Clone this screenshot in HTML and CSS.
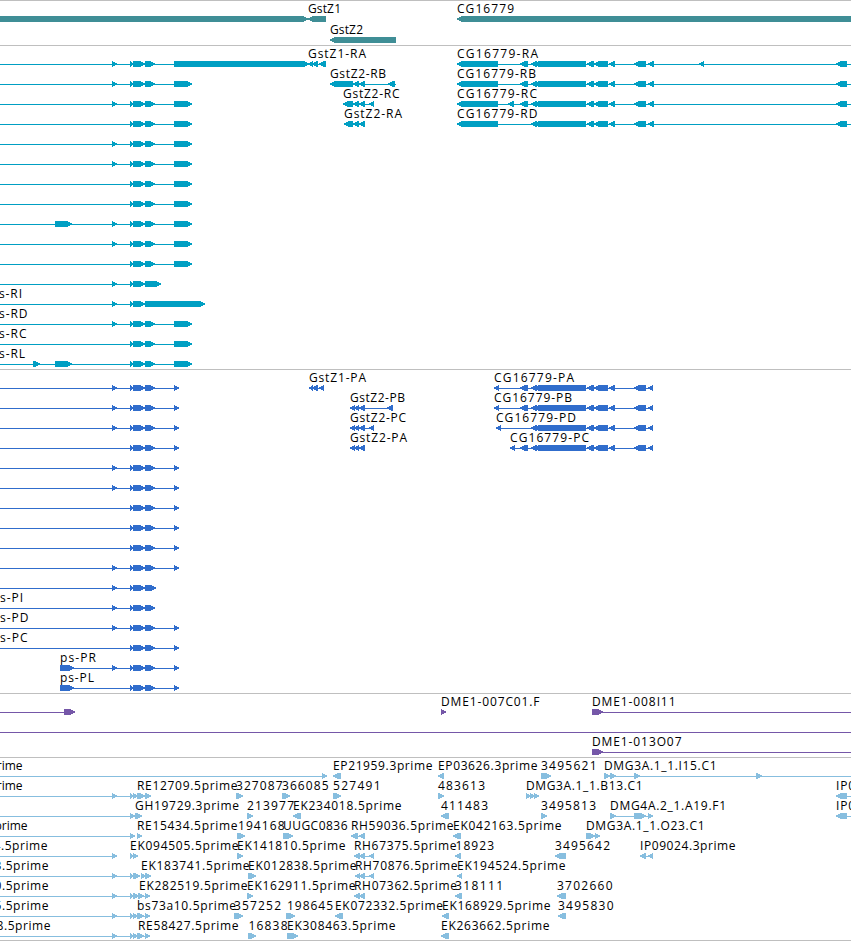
FILE: index.html
```html
<!DOCTYPE html>
<html lang="en">
<head>
<meta charset="utf-8">
<title>Genome tracks</title>
<link rel="stylesheet" href="styles.css">
</head>
<body>
<main class="browser" id="browser"></main>
<script src="tracks.js"></script>
</body>
</html>
```
FILE: styles.css
```css
body {
  margin: 0;
  background: #fff;
  overflow: hidden;
}

.browser {
  display: flex;
  flex-direction: column;
  width: 851px;
  border-bottom: 1px solid #bfbfbf;
}

.track {
  display: flex;
  flex-direction: column;
  border-top: 1px solid #bfbfbf;
  padding: 2px 0 1px;
}

.row {
  display: block;
  width: 851px;
  height: 20px;
  overflow: visible;
}

.genes { color: #3f8e96; padding-bottom: 0; }
.genes .row { height: 21px; }
.transcripts { color: #009fc3; }
.proteins { color: #306dcc; }
.clones { color: #7557a8; }
.ests { color: #87bedf; padding-bottom: 0; }

.feature {
  fill: currentColor;
  shape-rendering: crispEdges;
}

.label {
  fill: #000;
  font: 12px "Open Sans", "Noto Sans", sans-serif;
}
```
FILE: tracks.js
```js
// Row notation: "-a:b" intron line, ">a:b" forward exon, "<a:b" reverse exon.
// Labels are [start, end, text].
const T = '>112:117 ';
const A = '>130:134 >133:145 ';
const B = '>145:155 ';
const C = '>174:192';
const D = '>174:179';
const CG = '<531:537 <534:586 <587:594 <594:608 <609:615 <634:646 ';
const CGR = '-457:851 <457:498 ' + CG + '<648:654 <836:847 ';
const CGP = CG + '<648:653';
const EX = '<520:528 ';

const tracks = [
  { name: 'genes', rows: [
    ['>-5:308 <308:326 <457:860', [308, 341, 'GstZ1'], [457, 514, 'CG16779']],
    ['<330:396', [330, 363, 'GstZ2']]
  ]},
  { name: 'transcripts', rows: [
    ['-0:326 ' + T + A + B + '>174:309 <308:313 <312:318 <319:326 ' + CGR + EX + '<699:704',
      [308, 366, 'GstZ1-RA'], [457, 538, 'CG16779-RA']],
    ['-0:192 ' + T + A + B + C + ' -330:396 <330:353 <353:359 <359:365 <388:395 ' + CGR + EX,
      [330, 386, 'GstZ2-RB'], [457, 536, 'CG16779-RB']],
    ['-0:192 ' + T + A + B + C + ' -343:374 <343:353 <353:359 <359:365 <369:374 ' + CGR + EX + '<508:514',
      [343, 399.5, 'GstZ2-RC'], [457, 537, 'CG16779-RC']],
    ['-0:192 ' + A + B + C + ' -344:365 <344:353 <353:359 <359:365 ' + CGR,
      [344, 402, 'GstZ2-RA'], [457, 537.5, 'CG16779-RD']],
    ['-0:192 ' + T + A + B + C],
    ['-0:192 ' + T + A + B + C],
    ['-0:192 ' + A + B + C],
    ['-0:192 ' + A + B + C],
    ['-0:192 >55:72 ' + T + A + B + C],
    ['-0:192 ' + T + A + B + C],
    ['-0:192 ' + A + B + C],
    ['-0:160 ' + T + A + '>145:161'],
    ['-0:200 ' + T + A + '>145:205', [-1, 22, 's-RI']],
    ['-0:192 ' + T + A + B + C, [-1, 27.5, 's-RD']],
    ['-0:192 ' + A + B + C, [-1, 26.5, 's-RC']],
    ['-0:192 >33:40 >55:72 ' + A + B + C, [-1, 25, 's-RL']]
  ]},
  { name: 'proteins', rows: [
    ['-0:179 ' + T + A + B + D + ' -309:324 <309:313 <312:318 <319:324 -494:653 <494:499 ' + EX + CGP,
      [309, 366, 'GstZ1-PA'], [494, 574, 'CG16779-PA']],
    ['-0:179 ' + T + A + B + D + ' -350:393 <350:355 <354:359 <359:365 <387:393 -494:653 <494:499 ' + EX + CGP,
      [350, 405, 'GstZ2-PB'], [494, 572, 'CG16779-PB']],
    ['-0:179 ' + T + A + B + D + ' -350:374 <350:355 <354:359 <359:365 <369:374 -496:653 <496:501 ' + CGP,
      [350, 406, 'GstZ2-PC'], [496, 576, 'CG16779-PD']],
    ['-0:179 ' + A + B + D + ' -350:365 <350:355 <354:359 <359:365 -510:653 <510:515 ' + EX + CGP,
      [350, 407, 'GstZ2-PA'], [510, 589, 'CG16779-PC']],
    ['-0:179 ' + T + A + B + D],
    ['-0:179 ' + T + A + B + D],
    ['-0:179 ' + A + B + D],
    ['-0:179 ' + A + B + D],
    ['-0:179 ' + A + B + D],
    ['-0:179 ' + T + A + B + D],
    ['-0:150 ' + T + A + '>145:156'],
    ['-0:150 ' + T + A + '>145:155', [0, 23, 's-PI']],
    ['-0:179 ' + T + A + B + D, [0, 28.5, 's-PD']],
    ['-0:179 ' + A + B + D, [0, 27.5, 's-PC']],
    ['-60:179 >60:74 ' + T + A + B + D, [60, 96, 'ps-PR']],
    ['-60:179 >60:74 ' + A + B + D, [60, 94, 'ps-PL']]
  ]},
  { name: 'clones', rows: [
    ['-0:70 >64:75 >441:446 -592:851 >592:603', [441, 539.5, 'DME1-007C01.F'], [592, 675.5, 'DME1-008I11']],
    ['-0:851'],
    ['-592:851 >592:603', [592, 681.5, 'DME1-013O07']]
  ]},
  { name: 'ests', rows: [
    ['-0:327 >322:327 <333:341 <438:444 >541:551 -604:851 >604:610 >610:616 >634:640 >756:762',
      [-10.5, 22.5, 'prime'], [333, 432.5, 'EP21959.3prime'], [438, 537.5, 'EP03626.3prime'],
      [541, 596.5, '3495621'], [604, 716.5, 'DMG3A.1_1.I15.C1']],
    ['-0:150 ' + T + '>130:134 >133:138 >137:145 >145:151 >236:243 >282:290 >333:341 >438:444 >526:531 >530:535 >534:539 -836:851 <836:847',
      [-10.5, 22.5, 'prime'], [137, 237.5, 'RE12709.5prime'], [236, 282.5, '327087'], [282, 328.5, '366085'],
      [333, 380.5, '527491'], [438, 485, '483613'], [526, 642.5, 'DMG3A.1_1.B13.C1'], [836, 855, 'IP0']],
    ['-0:140 >130:135 >135:142 >247:253 <293:301 <441:449 >541:547 -610:653 >610:616 >634:646 >648:653 -836:851 <836:847',
      [135, 239, 'GH19729.3prime'], [247, 294, '213977'], [293, 401.5, 'EK234018.5prime'], [441, 488, '411483'],
      [541, 596, '3495813'], [610, 726, 'DMG4A.2_1.A19.F1'], [836, 855, 'IP0']],
    ['-0:135 >130:135 >137:142 >237:245 >283:293 -351:365 <351:358 <359:365 <453:461 -586:600 >586:595 >595:600',
      [-5.5, 27.5, 'prime'], [137, 237.5, 'RE15434.5prime'], [238, 284.5, '194168'], [283, 347.5, 'UUGC0836'],
      [351, 453.5, 'RH59036.5prime'], [453, 561.5, 'EK042163.5prime'], [586, 704.5, 'DMG3A.1_1.O23.C1']],
    ['-0:117 ' + T + '>130:134 >133:138 >237:243 -354:374 <354:360 <359:365 <369:374 <455:461 <555:566 -640:653 <640:646 <648:653',
      [-6.5, 47.5, '4.5prime'], [130, 238.5, 'EK094505.5prime'], [237, 345.5, 'EK141810.5prime'],
      [354, 456.5, 'RH67375.5prime'], [455.5, 494, '18923'], [555, 610, '3495642'], [640, 735.5, 'IP09024.3prime']],
    ['-0:140 ' + T + '>130:134 >133:140 >141:146 >145:151 >248:256 -355:374 <355:360 <359:365 <369:374 <457:462',
      [-5.5, 48.5, '3.5prime'], [141, 249.5, 'EK183741.5prime'], [248, 356.5, 'EK012838.5prime'],
      [355, 457.5, 'RH70876.5prime'], [457, 565.5, 'EK194524.5prime']],
    ['-0:150 ' + T + '>130:134 >133:139 >138:144 >145:150 >247:253 <354:360 <359:365 <455:462 <557:566',
      [-5.5, 48.5, '0.5prime'], [139, 247.5, 'EK282519.5prime'], [247, 355.5, 'EK162911.5prime'],
      [354, 457, 'RH07362.5prime'], [455, 503, '318111'], [557, 612.5, '3702660']],
    ['-0:150 ' + T + '>130:134 >133:138 >137:144 >145:150 >234:243 >286:295 <335:343 <442:449 <558:566',
      [-5.5, 48.5, '5.5prime'], [137, 236, 'bs73a10.5prime'], [234, 281, '357252'], [287, 333, '198645'],
      [335, 443, 'EK072332.5prime'], [442, 550.5, 'EK168929.5prime'], [558, 613.5, '3495830']],
    ['-0:150 ' + T + '>130:134 >133:138 >137:144 >145:150 >248:256 >287:298 <441:449',
      [-3.5, 50.5, '8.5prime'], [138, 238.5, 'RE58427.5prime'], [248.5, 287.5, '16838'],
      [287, 395.5, 'EK308463.5prime'], [441, 549.5, 'EK263662.5prime']]
  ]}
];

const NS = 'http://www.w3.org/2000/svg';
function svg(tag, attrs, parent) {
  const el = document.createElementNS(NS, tag);
  for (const k in attrs) el.setAttribute(k, attrs[k]);
  parent.appendChild(el);
  return el;
}

function shape(kind, a, b) {
  if (kind === '-') return `M${a} 16H${b}V17H${a}Z`;
  const head = Math.min(5, b - a);
  return kind === '>'
    ? `M${a} 13H${b - head}L${b} 15.5V16.5L${b - head} 19H${a}Z`
    : `M${b} 13H${a + head}L${a} 15.5V16.5L${a + head} 19H${b}Z`;
}

const root = document.getElementById('browser');
for (const track of tracks) {
  const section = document.createElement('section');
  section.className = 'track ' + track.name;
  root.appendChild(section);
  for (const [spec, ...labels] of track.rows) {
    const row = svg('svg', { class: 'row' }, section);
    for (const s of spec.trim().split(/\s+/)) {
      const [a, b] = s.slice(1).split(':').map(Number);
      svg('path', { class: 'feature', d: shape(s[0], a, b) }, row);
    }
    for (const [x, end, text] of labels) {
      svg('text', { class: 'label', x: x, y: 10, textLength: end - x }, row).textContent = text;
    }
  }
}
```
